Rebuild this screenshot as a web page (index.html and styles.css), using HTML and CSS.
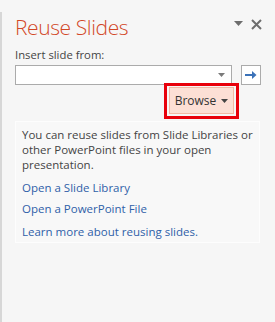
FILE: index.html
```html
<!DOCTYPE html>
<html>
<head>
<meta charset="utf-8">
<link rel="stylesheet" href="styles.css">
</head>
<body>
<div class="pane">
  <div class="header">
    <div class="title">Reuse Slides</div>
    <div class="controls">
      <svg class="menu" width="9" height="6" viewBox="0 0 9 6"><path d="M0 0H9L4.5 5Z" fill="#6d6d6d"/></svg>
      <svg class="close" width="11" height="11" viewBox="0 0 11 11"><path d="M1 1L10 10M10 1L1 10" stroke="#6d6d6d" stroke-width="2"/></svg>
    </div>
  </div>
  <div class="label">Insert slide from:</div>
  <div class="inputrow">
    <div class="combo">
      <svg class="combo-arrow" width="7" height="4" viewBox="0 0 7 4"><path d="M0 0H7L3.5 4Z" fill="#7a7a7a"/></svg>
    </div>
    <div class="go">
      <svg width="12" height="10" viewBox="0 0 12 10"><path d="M0 4H7V1L11.5 5L7 9V6H0Z" fill="#3b72b8"/></svg>
    </div>
  </div>
  <div class="browserow">
    <div class="highlight">
      <div class="browse">Browse <svg width="7" height="4" viewBox="0 0 7 4"><path d="M0 0H7L3.5 4Z" fill="#444"/></svg></div>
    </div>
  </div>
  <div class="info">
    <p class="desc">You can reuse slides from Slide Libraries or other PowerPoint files in your open presentation.</p>
    <a class="link l1">Open a Slide Library</a>
    <a class="link l2">Open a PowerPoint File</a>
    <a class="link l3">Learn more about reusing slides.</a>
  </div>
</div>
</body>
</html>
```
FILE: styles.css
```css
html, body {
  margin: 0;
  padding: 0;
}
body {
  width: 275px;
  height: 322px;
  background: #f6f6f6;
  font-family: "Open Sans", "Noto Sans", sans-serif;
  overflow: hidden;
}
.pane {
  height: 322px;
  border-left: 2px solid #d7d7d7;
  box-sizing: border-box;
  padding-left: 13px;
}
.header {
  display: flex;
  align-items: center;
  height: 30px;
  margin-top: 12px;
}
.title {
  font-size: 21px;
  font-weight: 300;
  color: #d24726;
  letter-spacing: -0.4px;
  flex: 1;
}
.controls {
  display: flex;
  align-items: center;
  gap: 8px;
  padding-right: 13px;
  margin-top: -6px;
}
.label {
  margin-top: 5px;
  font-size: 11.3px;
  color: #444;
  line-height: 16px;
}
.inputrow {
  display: flex;
  gap: 9px;
  margin-top: 2px;
}
.combo {
  width: 217px;
  height: 20px;
  box-sizing: border-box;
  border: 1px solid #ababab;
  background: #fff;
  display: flex;
  align-items: center;
  justify-content: flex-end;
  padding-right: 6px;
}
.go {
  width: 20px;
  height: 20px;
  box-sizing: border-box;
  border: 1px solid #ababab;
  background: #fff;
  display: flex;
  align-items: center;
  justify-content: center;
}
.browserow {
  display: flex;
  justify-content: flex-end;
  padding-right: 36px;
  margin-top: -2px;
}
.highlight {
  border: 3px solid #e8000b;
  padding: 1px 2px 2px 2px;
}
.browse {
  width: 65px;
  height: 27px;
  box-sizing: border-box;
  background: #fcdfd5;
  border: 1px solid #f3b8a5;
  font-size: 12px;
  color: #333;
  display: flex;
  align-items: center;
  justify-content: center;
  gap: 5px;
}
.info {
  width: 245px;
  box-sizing: border-box;
  margin-top: 2px;
  background: #f8f8f8;
  border: 1px solid #fdfdfd;
  padding: 5px 6px 3px 6px;
}
.desc {
  margin: 0;
  font-size: 11.5px;
  line-height: 15px;
  color: #444;
}
.link {
  display: block;
  font-size: 11.5px;
  line-height: 15px;
  color: #2f5fa8;
}
.l1 { margin-top: 8px; }
.l2 { margin-top: 6px; }
.l3 { margin-top: 8px; }
```
